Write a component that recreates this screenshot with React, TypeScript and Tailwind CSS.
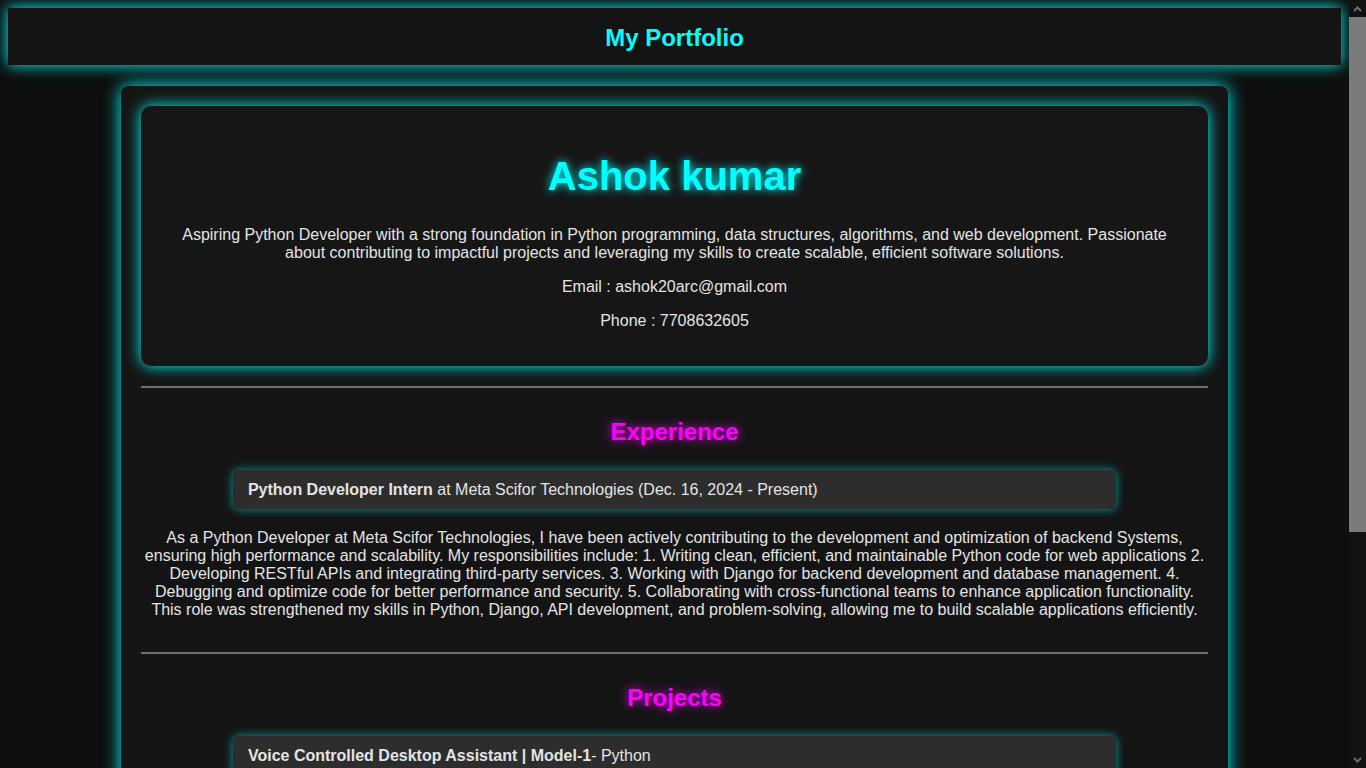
const experience = {
  role: "Python Developer Intern",
  company: "Meta Scifor Technologies",
  period: "Dec. 16, 2024 - Present",
  text: "As a Python Developer at Meta Scifor Technologies, I have been actively contributing to the development and optimization of backend Systems, ensuring high performance and scalability. My responsibilities include: 1. Writing clean, efficient, and maintainable Python code for web applications 2. Developing RESTful APIs and integrating third-party services. 3. Working with Django for backend development and database management. 4. Debugging and optimize code for better performance and security. 5. Collaborating with cross-functional teams to enhance application functionality. This role was strengthened my skills in Python, Django, API development, and problem-solving, allowing me to build scalable applications efficiently.",
};

const projects = [
  {
    title: "Voice Controlled Desktop Assistant | Model-1",
    tech: "Python",
    text: "Developed a voice controlled desktop assistant that performs everyday tasks such as opening applications, searching the web, playing music and telling the time using speech recognition and text-to-speech libraries.",
  },
];

const skills = ["Python", "Django", "HTML", "CSS", "JavaScript", "SQL", "Data Structures"];

const Divider = () => <hr className="border-0 border-t-2 border-[#6f6f6f]" />;

const SectionTitle = ({ children }: { children: string }) => (
  <h2 className="mt-[30px] mb-[24px] text-center text-2xl leading-[28px] font-bold text-[#ff00ff] [text-shadow:0_0_10px_#ff00ff]">
    {children}
  </h2>
);

const Item = ({ bold, rest }: { bold: string; rest: string }) => (
  <div className="mx-auto w-4/5 box-content px-[15px] py-[10px] leading-[19px] bg-[#2d2d2d] rounded-[5px] shadow-[0_0_10px_rgba(0,255,255,0.6)]">
    <b>{bold}</b>
    {rest}
  </div>
);

// the browser's scrollbar is hidden in screenshots, so draw it
const Scrollbar = () => (
  <div aria-hidden className="flex w-[17px] shrink-0 flex-col bg-[#121212]">
    <div className="flex h-[17px] items-center justify-center">
      <svg width="9" height="6" viewBox="0 0 9 6" fill="none" stroke="#6e6e6e" strokeWidth="2">
        <path d="M1 5 4.5 1.5 8 5" />
      </svg>
    </div>
    <div className="h-[515px] bg-[#7b7b7b]" />
    <div className="flex-1" />
    <div className="flex h-[17px] items-center justify-center">
      <svg width="9" height="6" viewBox="0 0 9 6" fill="none" stroke="#6e6e6e" strokeWidth="2">
        <path d="M1 1 4.5 4.5 8 1" />
      </svg>
    </div>
  </div>
);

export default function App() {
  return (
    <div className="flex h-screen bg-[#0e0e0e] font-['Liberation_Sans',Arial,sans-serif] text-base text-[#e4e4e4]">
      <div className="min-w-0 flex-1 overflow-y-auto p-2">
        <header className="bg-[#141414] pt-[16px] pb-[14px] text-center shadow-[0_0_14px_#00ffff]">
          <h1 className="text-2xl leading-[27px] font-bold text-[#00ffff]">My Portfolio</h1>
        </header>

        <main className="mx-auto mt-[21px] w-4/5 box-content p-5 bg-[#141414] rounded-lg shadow-[0_0_18px_#00ffff]">
          <section className="bg-[#161616] rounded-[10px] px-10 py-5 text-center shadow-[0_0_15px_#00ffff]">
            <h1 className="my-[27px] text-[40px] leading-[46px] font-bold text-[#00ffff] [text-shadow:0_0_10px_#00ffff]">
              Ashok kumar
            </h1>
            <p className="my-4 leading-[18px]">
              Aspiring Python Developer with a strong foundation in Python programming, data structures, algorithms, and web development. Passionate about contributing to impactful projects and leveraging my skills to create scalable, efficient software solutions.
            </p>
            <p className="my-4 leading-[18px]">Email : ashok20arc@gmail.com</p>
            <p className="my-4 leading-[18px]">Phone : 7708632605</p>
          </section>

          <div className="mt-5">
            <Divider />
          </div>

          <section>
            <SectionTitle>Experience</SectionTitle>
            <Item bold={experience.role} rest={` at ${experience.company} (${experience.period})`} />
            <p className="mt-5 mb-[33px] text-center leading-[18px]">{experience.text}</p>
          </section>

          <Divider />

          <section>
            <SectionTitle>Projects</SectionTitle>
            {projects.map((p) => (
              <div key={p.title}>
                <Item bold={p.title} rest={`- ${p.tech}`} />
                <p className="mt-5 mb-[33px] text-center leading-[18px]">{p.text}</p>
              </div>
            ))}
          </section>

          <Divider />

          <section className="pb-2">
            <SectionTitle>Skills</SectionTitle>
            <div className="mx-auto flex w-4/5 flex-wrap justify-center gap-3">
              {skills.map((s) => (
                <span
                  key={s}
                  className="px-[15px] py-[8px] leading-[19px] bg-[#2d2d2d] rounded-[5px] shadow-[0_0_10px_rgba(0,255,255,0.6)]"
                >
                  {s}
                </span>
              ))}
            </div>
          </section>
        </main>

        <footer className="mt-5 py-3 text-center text-sm text-[#9a9a9a]">© 2025 Ashok kumar</footer>
      </div>
      <Scrollbar />
    </div>
  );
}
